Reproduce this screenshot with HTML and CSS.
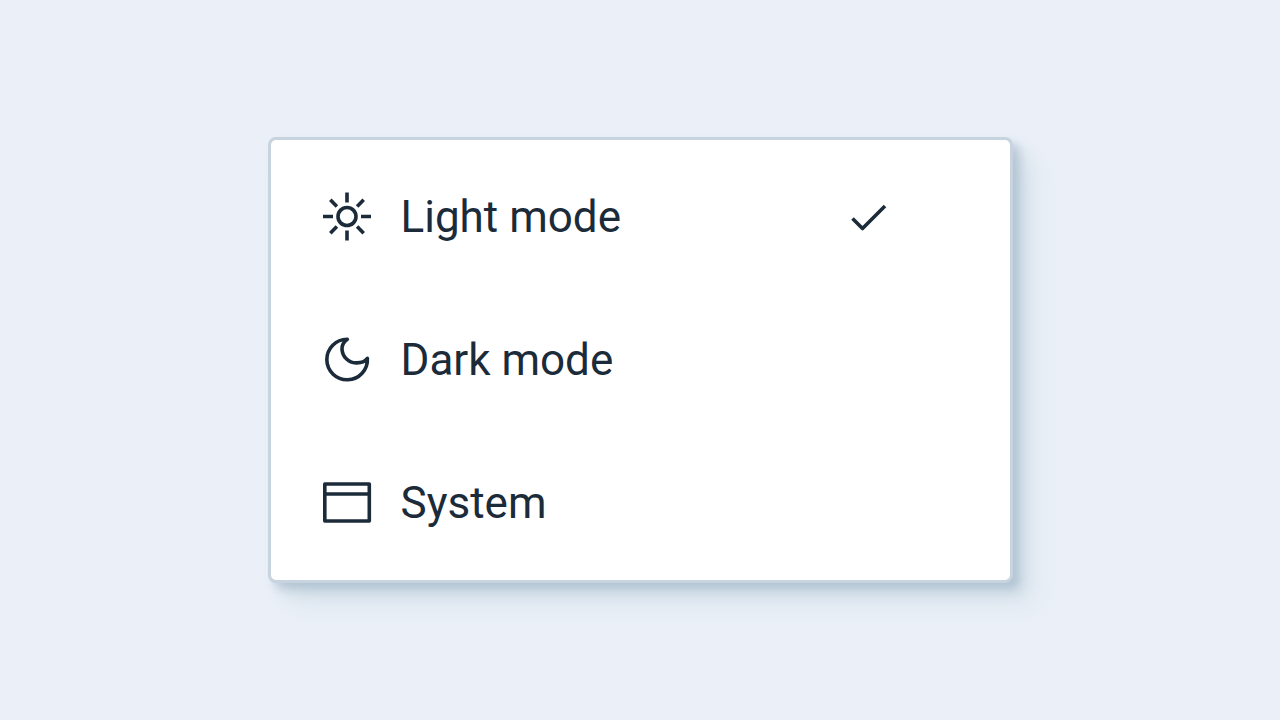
FILE: index.html
```html
<!DOCTYPE html>
<html lang="en">

<head>
    <meta charset="UTF-8">
    <meta name="viewport" content="width=device-width, initial-scale=1.0">
    <title>Theme menu</title>
    <link rel="stylesheet" href="styles.css">
</head>

<body>
    <main class="menu" role="menu" aria-label="Theme">
        <button type="button" class="menu-item" role="menuitemradio" aria-checked="true">
            <svg class="icon" viewBox="0 0 48 48" aria-hidden="true">
                <circle cx="24" cy="23.5" r="9" />
                <path d="M24 -0.5v10M24 37.5v10M0 23.5h10M38 23.5h10M7.3 6.8l6.6 6.6M34.1 33.6l6.6 6.6M7.3 40.2l6.6-6.6M34.1 13.4l6.6-6.6" />
            </svg>
            <span class="label">Light mode</span>
            <svg class="icon check" viewBox="0 0 48 48" aria-hidden="true">
                <path d="M7.5 25.5L17.5 35.5L40 13" />
            </svg>
        </button>
        <button type="button" class="menu-item" role="menuitemradio" aria-checked="false">
            <svg class="icon" viewBox="0 0 48 48" aria-hidden="true">
                <path d="M24.3 3.2A20.3 20.3 0 1 0 44.4 22.4C42 25.4 37.5 27.1 33 26.9C25.5 26.6 19.3 20.6 19 13.1C18.9 9.4 21 5.6 24.3 3.2Z" />
            </svg>
            <span class="label">Dark mode</span>
        </button>
        <button type="button" class="menu-item" role="menuitemradio" aria-checked="false">
            <svg class="icon" viewBox="0 0 48 48" aria-hidden="true">
                <rect x="1.8" y="5" width="44.5" height="37" />
                <path d="M2 15h44.5" />
            </svg>
            <span class="label">System</span>
        </button>
    </main>
</body>

</html>
```
FILE: styles.css
```css
body {
    font-family: Roboto, 'Liberation Sans', sans-serif;
    margin: 0;
    min-height: 100vh;
    display: flex;
    align-items: center;
    justify-content: center;
    background-color: #ebf0f8;
}

.menu {
    box-sizing: border-box;
    width: 100%;
    max-width: 745px;
    padding: 5px 0 6px;
    background-color: white;
    border: 3px solid #c7d3df;
    border-radius: 8px;
    box-shadow: 6px 6px 8px rgba(130, 152, 178, 0.35), 12px 12px 14px rgba(170, 195, 205, 0.28), 22px 22px 24px rgba(190, 208, 220, 0.3);
}

.menu-item {
    display: flex;
    align-items: center;
    gap: 30px;
    width: 100%;
    padding: 45px 117px 45px 52px;
    border: none;
    background: none;
    color: #1c2b3a;
    font-family: inherit;
    font-size: 44px;
    line-height: 52px;
    text-align: left;
    cursor: pointer;
}

.label {
    padding-top: 1px;
}

.icon {
    flex: none;
    width: 48px;
    height: 48px;
    overflow: visible;
    fill: none;
    stroke: currentColor;
    stroke-width: 3.6;
    stroke-linejoin: round;
}

.check {
    margin-left: auto;
}
```
